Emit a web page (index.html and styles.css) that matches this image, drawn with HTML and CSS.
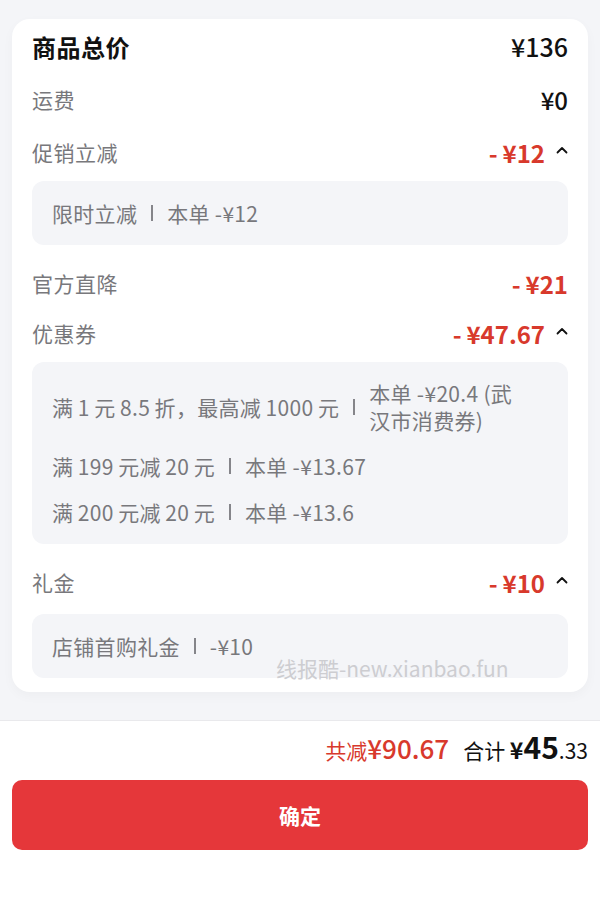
FILE: index.html
```html
<!DOCTYPE html>
<html lang="zh-CN">
<head>
  <meta charset="UTF-8">
  <title>优惠明细</title>
  <link rel="stylesheet" href="styles.css">
</head>
<body>

  <div class="page">
    <div class="card">
      <div class="row title">
        <span class="label">商品总价</span>
        <span class="amount">¥136</span>
      </div>

      <div class="row">
        <span class="label">运费</span>
        <span class="amount">¥0</span>
      </div>

      <div class="row">
        <span class="label">促销立减</span>
        <span class="amount red">-&thinsp;¥12<svg class="chev" viewBox="0 0 12 8"><polyline points="1.5,6.5 6,2 10.5,6.5"/></svg></span>
      </div>
      <div class="detail">
        <div class="item">
          <span>限时立减</span><i class="sep"></i><span>本单 -¥12</span>
        </div>
      </div>

      <div class="row">
        <span class="label">官方直降</span>
        <span class="amount red">-&thinsp;¥21</span>
      </div>

      <div class="row tight">
        <span class="label">优惠券</span>
        <span class="amount red">-&thinsp;¥47.67<svg class="chev" viewBox="0 0 12 8"><polyline points="1.5,6.5 6,2 10.5,6.5"/></svg></span>
      </div>
      <div class="detail">
        <div class="item wrap">
          <span>满&thinsp;1&thinsp;元&thinsp;8.5&thinsp;折，最高减&thinsp;1000&thinsp;元</span><i class="sep"></i><span class="rest">本单 -¥20.4 (武汉市消费券)</span>
        </div>
        <div class="item">
          <span>满&thinsp;199&thinsp;元减&thinsp;20&thinsp;元</span><i class="sep"></i><span>本单 -¥13.67</span>
        </div>
        <div class="item">
          <span>满&thinsp;200&thinsp;元减&thinsp;20&thinsp;元</span><i class="sep"></i><span>本单 -¥13.6</span>
        </div>
      </div>

      <div class="row">
        <span class="label">礼金</span>
        <span class="amount red">-&thinsp;¥10<svg class="chev" viewBox="0 0 12 8"><polyline points="1.5,6.5 6,2 10.5,6.5"/></svg></span>
      </div>
      <div class="detail last">
        <div class="item">
          <span>店铺首购礼金</span><i class="sep"></i><span>-¥10</span>
        </div>
      </div>

      <div class="watermark">线报酷-new.xianbao.fun</div>
    </div>
  </div>

  <div class="footer">
    <div class="summary">
      <span class="saved">共减<b>¥90.67</b></span>
      <span class="total">合计 <b class="yen">¥</b><b class="int">45</b><span class="dec">.33</span></span>
    </div>
    <button class="confirm">确定</button>
  </div>

</body>
</html>
```

FILE: styles.css
```css
:root {
  --bg: #f4f5f8;
  --text: #111111;
  --grey: #78787c;
  --red: #d8392c;
  --primary: #e5373a;
}

body {
  margin: 0;
  font-family: "Noto Sans CJK SC", "Noto Sans", sans-serif;
  color: var(--text);
  background: #ffffff;
}

.page {
  background: var(--bg);
  padding: 19px 12px 28px;
}

.card {
  position: relative;
  background: #ffffff;
  border-radius: 18px;
  padding: 13px 20px 14px;
  box-shadow: 0 4px 12px rgba(0, 0, 0, 0.03);
}

.row {
  display: flex;
  justify-content: space-between;
  align-items: center;
  height: 28px;
  margin-top: 25px;
}

.row.title {
  margin-top: 0;
}

.detail + .row {
  margin-top: 24px;
}

.row.tight {
  margin-top: 22px;
}

.label {
  font-size: 21px;
  letter-spacing: 0.5px;
  color: var(--grey);
}

.title .label {
  font-size: 24px;
  font-weight: 700;
  letter-spacing: 0.5px;
  color: var(--text);
}

.amount {
  display: flex;
  align-items: center;
  font-size: 24px;
  font-weight: 500;
}

.title .amount {
  font-size: 25px;
}

.amount.red {
  color: var(--red);
  font-weight: 700;
}

.chev {
  width: 12px;
  height: 8px;
  margin-left: 11px;
  margin-bottom: 4px;
  fill: none;
  stroke: #111111;
  stroke-width: 1.8;
  stroke-linecap: round;
  stroke-linejoin: round;
}

.detail {
  margin-top: 15px;
  background: var(--bg);
  border-radius: 12px;
  padding: 18px 20px;
  display: flex;
  flex-direction: column;
  gap: 18px;
}

.detail.last {
  margin-top: 18px;
}

.item {
  display: flex;
  align-items: center;
  font-size: 21px;
  letter-spacing: 0.3px;
  line-height: 28px;
  color: var(--grey);
}

.item.wrap {
  line-height: 27px;
}

.item .rest {
  flex: 1;
  padding-right: 26px;
}

.sep {
  flex: none;
  width: 2px;
  height: 16px;
  margin: 0 14px;
  background: #85858a;
}

.watermark {
  position: absolute;
  left: 264px;
  top: 634px;
  font-size: 21px;
  color: #cdcdd1;
  white-space: nowrap;
}

.footer {
  border-top: 1px solid #e9e9ec;
  padding: 3px 12px 60px;
}

.summary {
  display: flex;
  justify-content: flex-end;
  align-items: baseline;
  gap: 14px;
  height: 32px;
}

.saved {
  color: var(--red);
  font-size: 21px;
}

.saved b {
  font-size: 26px;
  font-weight: 500;
}

.total {
  font-size: 21px;
}

.total .yen {
  font-size: 23px;
}

.total .int {
  font-size: 30px;
}

.total .dec {
  font-size: 21px;
}

button.confirm {
  display: block;
  width: 100%;
  height: 70px;
  margin-top: 24px;
  border: none;
  border-radius: 10px;
  background: var(--primary);
  color: #ffffff;
  font-family: inherit;
  font-size: 21px;
  font-weight: 700;
}
```
